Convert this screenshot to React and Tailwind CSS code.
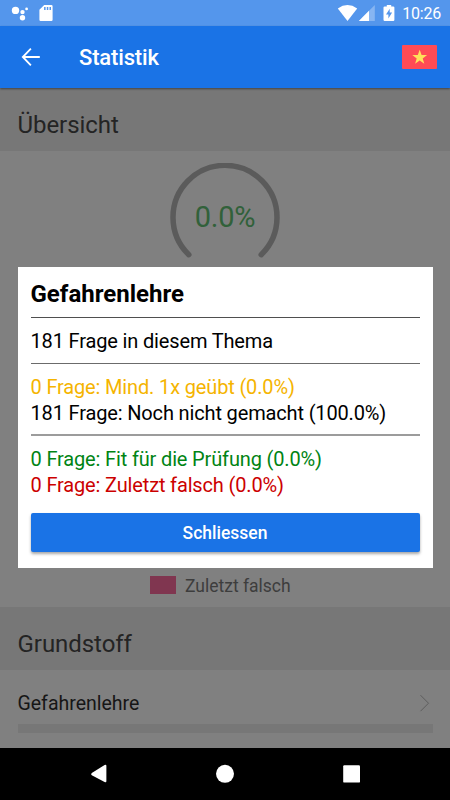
import React from 'react';

const StatusBar = () => (
  <div className="flex h-[26px] items-center justify-between bg-[#5496ec] text-white">
    <div className="flex items-center">
      <svg className="h-[26px] w-[60px]" viewBox="0 0 60 26" fill="currentColor">
        <circle cx="15.5" cy="10.4" r="3.7" />
        <circle cx="22.5" cy="12.1" r="2.2" />
        <circle cx="26.6" cy="8.9" r="1.4" />
        <circle cx="22.5" cy="17.8" r="2.7" />
        <path
          fillRule="evenodd"
          d="M44.2 5h7.2q1.2 0 1.2 1.2v13.6q0 1.2-1.2 1.2H40.6q-1.2 0-1.2-1.2V9.8zM44.1 7v3h1.5V7zM46.8 7v3h1.5V7zM49.5 7v3h1.5V7z"
        />
      </svg>
    </div>
    <div className="flex items-center pr-[9px]">
      <svg className="h-[26px] w-[67px]" viewBox="-1.5 0 67 26" fill="currentColor">
        <path d="M2.3 8.4Q12 1.8 21.7 8.4L12 21z" />
        <path opacity=".3" d="M23.3 21L39.300 5v16z" />
        <path d="M23.3 21l10.2-10.2V21z" />
        <path
          fillRule="evenodd"
          d="M51.300 5h4.400v1.400h2q1.200 0 1.200 1.200v12.200q0 1.200-1.200 1.200h-8.500q-1.200 0-1.200-1.200V7.600q0-1.200 1.200-1.200h2.100zM54.200 8.700l-3.700 5.700h2.400v4l3.700-5.800h-2.400z"
        />
      </svg>
      <span className="pt-[2px] pl-[1px] text-[16px] leading-[26px] tracking-[-0.2px]">10:26</span>
    </div>
  </div>
);

const Header = () => (
  <header className="relative z-10 flex h-[62px] items-center bg-[#1a73e6] pr-[13px] pl-[21px] text-white shadow-[0_1px_2px_rgba(0,0,0,0.45)]">
    <svg className="h-5 w-5" viewBox="0 0 20 20" fill="none" stroke="currentColor" strokeWidth="1.8">
      <path d="M18.800 10H2.200M9.900 1.700L1.800 10l8.100 8.300" />
    </svg>
    <h1 className="ml-[38px] flex-1 pt-[2px] text-[22px] leading-[26px] font-medium tracking-[-0.15px]">Statistik</h1>
    <svg className="h-6 w-[35px]" viewBox="0 0 35 24">
      <rect width="35" height="24" rx="1" fill="#ff4b55" />
      <path
        fill="#ffe15a"
        d="M17.700 4.800l1.900 5.200 5.500.1-4.400 3.400 1.600 5.300-4.600-3.200-4.600 3.200 1.600-5.300-4.400-3.400 5.500-.1z"
      />
    </svg>
  </header>
);

const SectionTitle = ({ children }) => (
  <h2 className="flex h-[63px] items-center bg-[#777] px-[17.5px] pt-[11px] text-[24px] tracking-[-0.05px] text-[#242424]">
    {children}
  </h2>
);

const Gauge = () => (
  <div className="relative mx-auto h-[110px] w-[110px]">
    <svg className="h-full w-full" viewBox="0 0 110 110" fill="none">
      <path
        d="M18.800 91.700A52 52 0 1 1 91.200 91.700"
        stroke="#5b5b5b"
        strokeWidth="5.5"
        strokeLinecap="round"
      />
    </svg>
    <span className="absolute inset-0 flex items-center justify-center text-[29px] tracking-[-0.2px] text-[#31613a]">
      0.0%
    </span>
  </div>
);

const Dialog = () => (
  <div className="absolute inset-x-[17.5px] top-[179px] flex h-[301px] flex-col bg-white px-[13px] text-[20px] leading-[26px] tracking-[-0.15px] text-black">
    <h3 className="h-[50px] pt-[14px] text-[24px] font-bold tracking-normal">Gefahrenlehre</h3>
    <div className="h-[46px] border-t border-[#4f4f4f] pt-[10px]">181 Frage in diesem Thema</div>
    <div className="h-[71px] border-t border-[#6b6b6b] pt-[10px]">
      <p className="text-[#f5b400]">0 Frage: Mind. 1x geübt (0.0%)</p>
      <p>181 Frage: Noch nicht gemacht (100.0%)</p>
    </div>
    <div className="h-[79px] border-t-2 border-[#9c9c9c] pt-[10px]">
      <p className="text-[#008414]">0 Frage: Fit für die Prüfung (0.0%)</p>
      <p className="text-[#cc0000]">0 Frage: Zuletzt falsch (0.0%)</p>
    </div>
    <button className="h-[39px] rounded-[2px] bg-[#1a73e6] text-[17.5px] font-medium tracking-normal text-white shadow-[0_2px_3px_rgba(0,0,0,0.35)]">
      Schliessen
    </button>
  </div>
);

const NavBar = () => (
  <footer className="flex h-[52px] items-center bg-black text-white">
    <svg className="h-[52px] w-full" viewBox="0 0 450 52" fill="currentColor">
      <path d="M91.800 24.900L104.600 17q1.800-.8 1.800 1v15q0 1.800-1.800 1L91.800 27.300q-1.500-1.200 0-2.400z" />
      <circle cx="225" cy="25.8" r="9" />
      <rect x="343.2" y="17.3" width="16.8" height="17.3" rx="1.2" />
    </svg>
  </footer>
);

export default function App() {
  return (
    <div className="flex h-[800px] w-[450px] flex-col overflow-hidden bg-[#808080] font-[Roboto,sans-serif]">
      <StatusBar />
      <Header />
      <main className="relative flex h-[660px] flex-col">
        <SectionTitle>Übersicht</SectionTitle>
        <div className="flex h-[456px] flex-col justify-between pt-[12px] pb-[9px]">
          <Gauge />
          <div className="flex items-center gap-[9px] pl-[150px] text-[17.5px] leading-6 text-[#3d3d3d]">
            <span className="mb-[1px] h-[18px] w-[26px] bg-[#803650]" />
            <span className="pt-[1px]">Zuletzt falsch</span>
          </div>
        </div>
        <SectionTitle>Grundstoff</SectionTitle>
        <div className="px-[17.5px] pt-[21px]">
          <div className="flex items-center justify-between text-[19.5px] leading-[26px] text-[#161616]">
            Gefahrenlehre
            <svg className="mr-[3px] h-[18px] w-[11px]" viewBox="0 0 11 18" fill="none" stroke="#5d5d5d">
              <path d="M1.500 .200L9.500 8.200l-8 8" />
            </svg>
          </div>
          <div className="mt-[7px] h-[9px] bg-[#777]" />
        </div>
        <Dialog />
      </main>
      <NavBar />
    </div>
  );
}
